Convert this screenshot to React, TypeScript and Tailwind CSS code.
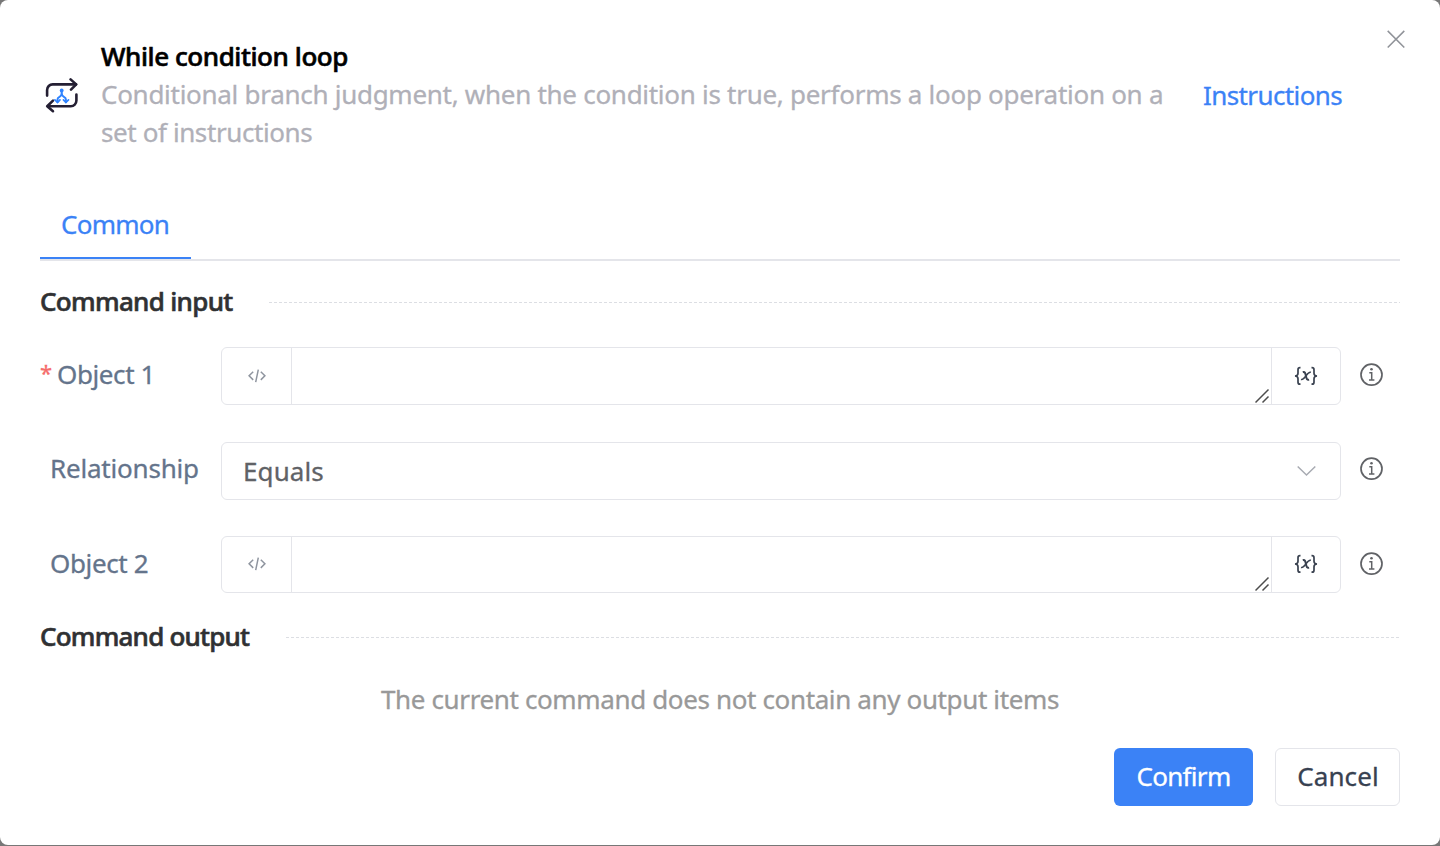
import type { ReactNode } from "react";

function LoopIcon() {
  return (
    <svg width="34" height="36" viewBox="0 0 34 36" fill="none" className="block">
      <g stroke="#241f33" strokeWidth="2.6" strokeLinecap="round" strokeLinejoin="round">
        <path d="M2.1 17.600V12a5.600 5.600 0 0 1 5.600-5.600H31" />
        <path d="M25.600 1.400 31.200 6.400l-5.200 5.200" />
        <path d="M31.400 16.600v6a5.600 5.600 0 0 1-5.600 5.600H3" />
        <path d="M8 22.600 2.200 28.200l5.800 5" />
      </g>
      <g stroke="#2f83ff" strokeWidth="2" strokeLinecap="round" strokeLinejoin="round">
        <path d="M16.700 13v3.200" />
        <path d="M12.500 24.200v-2.700c0-3.200 3.700-2.200 4.200-5.300.5 3.100 4.200 2.100 4.200 5.300v2.700" />
        <path d="M9.900 21.900l2.600 2.600 2.500-2.600M18.400 21.900l2.500 2.600 2.600-2.600" strokeWidth="1.700" />
      </g>
      <circle cx="16.700" cy="12.500" r="1.900" fill="#2f83ff" />
    </svg>
  );
}

function CloseIcon() {
  return (
    <svg width="18" height="18" viewBox="0 0 18 18" className="block" stroke="#909399" strokeWidth="1.500">
      <path d="M.7.9l16.600 16.600M17.300.9L.7 17.500" />
    </svg>
  );
}

function CodeIcon() {
  return (
    <svg width="18" height="14" viewBox="0 0 18 14" className="-mt-px block" fill="none" stroke="#8f959f" strokeWidth="1.500">
      <path d="M5.200 2.800 1.100 6.800l4.100 4.100M12.800 2.800l4.100 4-4.100 4.100M10.300.6 7.700 13.200" />
    </svg>
  );
}

function VariableIcon() {
  return (
    <svg width="24" height="20" viewBox="0 0 24 20" className="-mt-px block" fill="none" stroke="#39414f" strokeWidth="1.700">
      <path d="M6.500 1.700H6Q4 1.700 4 3.700v3.500Q4 9.800 1 10q3 .2 3 2.700v3.500q0 2 2 2h.5" />
      <path d="M17.500 1.700h.5q2 0 2 2v3.500q0 2.600 3 2.800-3 .2-3 2.700v3.500q0 2-2 2h-.5" />
      <path d="M8.800 6.200c2-.7 2.500.4 3.100 3.600s1.200 4.400 3.200 3.800" strokeWidth="2" />
      <path d="M16.900 6.300c-1.900-.6-2.800.5-4.700 3.200s-3.100 4.500-5.200 3.900" strokeWidth="1.600" />
    </svg>
  );
}

function InfoIcon() {
  return (
    <svg width="24" height="24" viewBox="0 0 24 24" className="block" fill="none" stroke="#606266" strokeWidth="1.700">
      <circle cx="11.500" cy="11.700" r="10.500" />
      <path d="M9.300 9.800h2.400v7M9 17h5.400" strokeWidth="1.500" />
      <circle cx="11.500" cy="6.200" r="1.300" fill="#606266" stroke="none" />
    </svg>
  );
}

function ResizeGrip() {
  return (
    <svg width="16" height="16" viewBox="0 0 16 16" className="block" stroke="#4d4d4d" strokeWidth="1.500">
      <path d="M.5 14.500 13.500 1.500M7.500 14.500 13.500 8.500" />
    </svg>
  );
}

function SectionTitle({ children }: { children: ReactNode }) {
  return (
    <div className="flex h-[38px] items-center">
      {children}
      <svg className="ml-9 h-px min-w-0 flex-1" preserveAspectRatio="none">
        <line x1="0" x2="100%" y1="0.5" y2="0.5" stroke="#dcdee3" strokeDasharray="3 2" />
      </svg>
    </div>
  );
}

function ValueField({ height }: { height: string }) {
  return (
    <div className={`flex w-[1120px] rounded-md border border-[#e4e5ea] ${height}`}>
      <div className="flex w-[70px] items-center justify-center border-r border-[#e4e5ea]">
        <CodeIcon />
      </div>
      <div className="flex flex-1 items-end justify-end">
        <ResizeGrip />
      </div>
      <div className="flex w-[69px] items-center justify-center border-l border-[#e4e5ea]">
        <VariableIcon />
      </div>
    </div>
  );
}

export default function App() {
  return (
    <div className="h-[846px] w-[1440px] overflow-hidden bg-[#777777] font-['Noto_Sans',sans-serif] text-[26px] leading-[38px] [-webkit-text-stroke:0.3px]">
      <div className="h-[845px] rounded-lg bg-white px-10 pt-[37px]">
        <header className="flex h-[114px]">
          <div className="ml-[5px] mt-[41px] w-[34px]">
            <LoopIcon />
          </div>
          <div className="ml-[22px] w-[1080px] whitespace-nowrap">
            <h1 className="font-medium tracking-[-0.42px] text-black [-webkit-text-stroke:0.6px]">While condition loop</h1>
            <p className="tracking-[-0.28px] text-[#b0b0b8]">
              Conditional branch judgment, when the condition is true, performs a loop operation on a
            </p>
            <p className="tracking-[-0.4px] text-[#b0b0b8]">set of instructions</p>
          </div>
          <a className="ml-[22px] mt-[39px] w-[160px] tracking-[-0.6px] text-[#3b82f6]">Instructions</a>
          <button className="ml-[24px] -mt-[7px] -mr-2 h-[18px] w-[18px] shrink-0">
            <CloseIcon />
          </button>
        </header>

        <nav className="mt-[53px] h-[57px] border-b-2 border-[#e4e5ea]">
          <div className="h-[55px] w-[151px] border-b-2 border-[#3b82f6] pl-[21px] pt-px tracking-[-0.75px] text-[#3b82f6]">
            Common
          </div>
        </nav>

        <section className="pt-[22px]">
          <SectionTitle>
            <h2 className="w-[193px] -translate-y-px whitespace-nowrap font-medium tracking-[-0.68px] text-[#303133] [-webkit-text-stroke:0.6px]">Command input</h2>
          </SectionTitle>
          <div className="mt-[26px] flex h-[58px]">
            <div className="flex w-[181px] pt-[8px] text-[#64748b]">
              <span className="w-[17px] text-[22px] leading-[34px] text-[#f56c6c]">*</span>
              <span className="tracking-[-0.4px]">Object 1</span>
            </div>
            <ValueField height="h-[58px]" />
            <div className="ml-[19px] mt-[16px]"><InfoIcon /></div>
          </div>
          <div className="mt-[37px] flex h-[58px]">
            <div className="w-[181px] pl-[10px] pt-[7px] tracking-[-0.2px] text-[#64748b]">Relationship</div>
            <div className="flex h-[58px] w-[1120px] items-center justify-between rounded-md border border-[#e4e5ea] pl-[21px] pr-[23px] text-[#606266]">
              <span className="tracking-[0.1px]">Equals</span>
              <svg width="20" height="12" viewBox="0 0 20 12" className="block" fill="none" stroke="#a8abb2" strokeWidth="1.500">
                <path d="M.7 1.500 9.500 10 18.300 1.500" />
              </svg>
            </div>
            <div className="ml-[19px] mt-[15px]"><InfoIcon /></div>
          </div>
          <div className="mt-[36px] flex h-[57px]">
            <div className="w-[181px] pl-[10px] pt-[8px] tracking-[-0.36px] text-[#64748b]">Object 2</div>
            <ValueField height="h-[57px]" />
            <div className="ml-[19px] mt-[16px]"><InfoIcon /></div>
          </div>
        </section>

        <section className="pt-[25px]">
          <SectionTitle>
            <h2 className="w-[210px] -translate-y-px whitespace-nowrap font-medium tracking-[-0.78px] text-[#303133] [-webkit-text-stroke:0.6px]">Command output</h2>
          </SectionTitle>
          <p className="mt-[24px] text-center tracking-[-0.366px] text-[#999999]">
            The current command does not contain any output items
          </p>
        </section>

        <footer className="mt-[30px] flex justify-end gap-[22px]">
          <button className="h-[58px] w-[139px] rounded-md bg-[#3b82f6] pb-[2px] tracking-[-0.7px] text-white">Confirm</button>
          <button className="h-[58px] w-[125px] rounded-md border border-[#e4e5ea] pb-[2px] pl-px tracking-[0.1px] text-[#374151]">Cancel</button>
        </footer>
      </div>
    </div>
  );
}
